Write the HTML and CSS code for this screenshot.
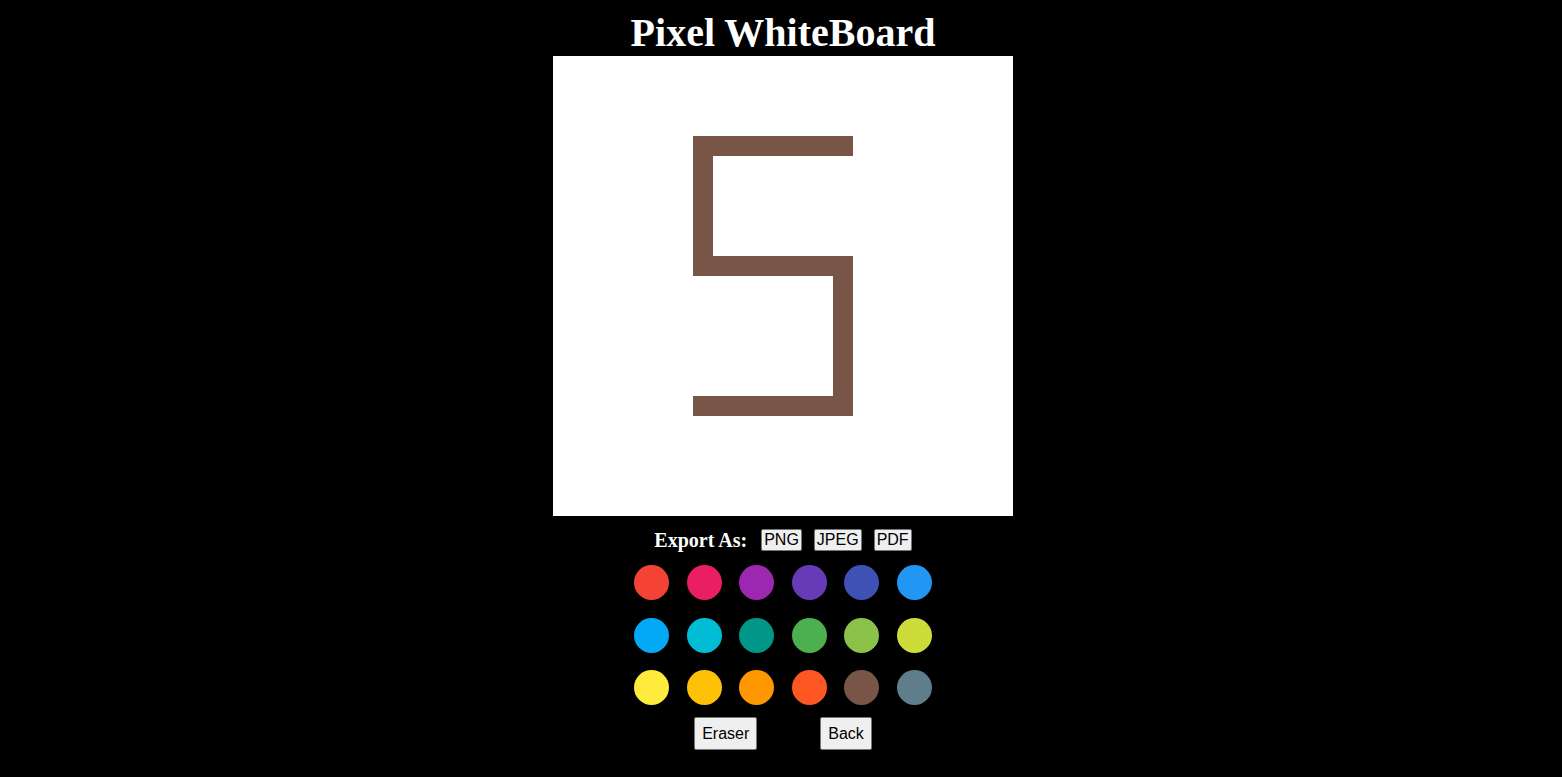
FILE: index.html
```html
<!DOCTYPE html>
<html>
<head>
<meta charset="utf-8">
<title>Pixel WhiteBoard</title>
<link rel="stylesheet" href="styles.css">
</head>
<body>
<main class="app">
  <h1 class="title">Pixel WhiteBoard</h1>
  <svg class="board" width="460" height="460" viewBox="0 0 460 460" xmlns="http://www.w3.org/2000/svg">
    <rect width="460" height="460" fill="#ffffff"/>
    <g fill="#795548">
      <rect x="140" y="80" width="160" height="20"/>
      <rect x="140" y="80" width="20" height="140"/>
      <rect x="140" y="200" width="160" height="20"/>
      <rect x="280" y="200" width="20" height="160"/>
      <rect x="140" y="340" width="160" height="20"/>
    </g>
  </svg>
  <div class="export">
    <span class="export-label">Export As:</span>
    <button class="export-btn">PNG</button>
    <button class="export-btn">JPEG</button>
    <button class="export-btn">PDF</button>
  </div>
  <div class="palette">
    <span class="swatch c1"></span>
    <span class="swatch c2"></span>
    <span class="swatch c3"></span>
    <span class="swatch c4"></span>
    <span class="swatch c5"></span>
    <span class="swatch c6"></span>
    <span class="swatch c7"></span>
    <span class="swatch c8"></span>
    <span class="swatch c9"></span>
    <span class="swatch c10"></span>
    <span class="swatch c11"></span>
    <span class="swatch c12"></span>
    <span class="swatch c13"></span>
    <span class="swatch c14"></span>
    <span class="swatch c15"></span>
    <span class="swatch c16"></span>
    <span class="swatch c17"></span>
    <span class="swatch c18"></span>
  </div>
  <div class="tools">
    <button class="tool-btn">Eraser</button>
    <button class="tool-btn">Back</button>
  </div>
</main>
</body>
</html>
```
FILE: styles.css
```css
html, body {
  margin: 0;
  padding: 0;
  background: #000000;
}
body {
  font-family: "Liberation Serif", "Times New Roman", serif;
  color: #ffffff;
}
.app {
  display: flex;
  flex-direction: column;
  align-items: center;
  padding-top: 10px;
  padding-left: 4px;
}
.title {
  margin: 0;
  font-size: 40px;
  line-height: 46px;
  font-weight: bold;
  color: #ffffff;
}
.board {
  display: block;
}
.export {
  display: flex;
  align-items: center;
  margin-top: 13px;
  height: 22px;
}
.export-label {
  font-weight: bold;
  font-size: 20px;
  margin-right: 14px;
}
.export-btn {
  font-family: "Liberation Sans", Arial, sans-serif;
  font-size: 16px;
  line-height: 18px;
  padding: 1px 2px;
  border: 1px solid #767676;
  border-radius: 2px;
  background: #efefef;
  color: #000000;
  margin-right: 12px;
}
.export-btn:last-child {
  margin-right: 0;
}
.palette {
  display: grid;
  grid-template-columns: repeat(6, 35px);
  grid-auto-rows: 35px;
  column-gap: 17.5px;
  row-gap: 17.5px;
  margin-top: 14px;
}
.swatch {
  display: block;
  width: 35px;
  height: 35px;
  border-radius: 50%;
}
.c1 { background: #f44336; }
.c2 { background: #e91e63; }
.c3 { background: #9c27b0; }
.c4 { background: #673ab7; }
.c5 { background: #3f51b5; }
.c6 { background: #2196f3; }
.c7 { background: #03a9f4; }
.c8 { background: #00bcd4; }
.c9 { background: #009688; }
.c10 { background: #4caf50; }
.c11 { background: #8bc34a; }
.c12 { background: #cddc39; }
.c13 { background: #ffeb3b; }
.c14 { background: #ffc107; }
.c15 { background: #ff9800; }
.c16 { background: #ff5722; }
.c17 { background: #795548; }
.c18 { background: #607d8b; }
.tools {
  display: flex;
  gap: 63px;
  margin-top: 12px;
}
.tool-btn {
  font-family: "Liberation Sans", Arial, sans-serif;
  font-size: 16px;
  line-height: 19px;
  padding: 6px 7px;
  border: 1px solid #767676;
  border-radius: 2px;
  background: #efefef;
  color: #000000;
}
```
